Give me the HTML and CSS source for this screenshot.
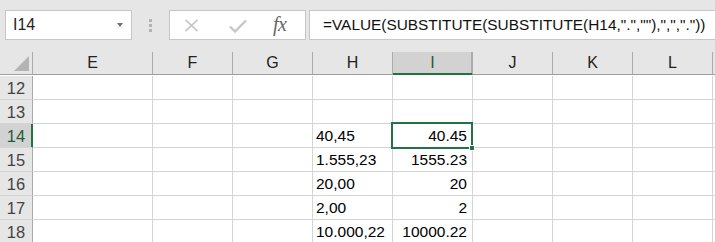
FILE: index.html
```html
<!DOCTYPE html>
<html lang="en">
<head>
    <meta charset="UTF-8">
    <title>Sheet</title>
    <link rel="stylesheet" href="styles.css">
</head>
<body>
    <div class="topbar">
        <div class="namebox">
            <span>I14</span>
            <span class="caret"></span>
        </div>
        <div class="grip"><i></i><i></i><i></i></div>
        <div class="fbuttons">
            <svg class="ico-x" width="15" height="13" viewBox="0 0 15 13">
                <path d="M1.5 0.8 L13.5 12.2 M13.5 0.8 L1.5 12.2" stroke="#c6c6c6" stroke-width="1.6" fill="none"/>
            </svg>
            <svg class="ico-ok" width="18" height="14" viewBox="0 0 18 14">
                <path d="M1 7.5 L6 12.5 L17 1.5" stroke="#c6c6c6" stroke-width="2.4" fill="none"/>
            </svg>
            <span class="fx">fx</span>
        </div>
        <div class="formula">=VALUE(SUBSTITUTE(SUBSTITUTE(H14,".",""),",","."))</div>
    </div>

    <div class="sheet">
        <div class="row head">
            <div class="cell rh corner"><span class="tri"></span></div>
            <div class="cell wide">E</div>
            <div class="cell">F</div>
            <div class="cell">G</div>
            <div class="cell">H</div>
            <div class="cell sel">I</div>
            <div class="cell">J</div>
            <div class="cell">K</div>
            <div class="cell">L</div>
            <div class="cell rest"></div>
        </div>
        <div class="body">
            <div class="row">
                <div class="cell rh">12</div>
                <div class="cell wide"></div><div class="cell"></div><div class="cell"></div>
                <div class="cell"></div><div class="cell"></div><div class="cell"></div>
                <div class="cell"></div><div class="cell"></div><div class="cell rest"></div>
            </div>
            <div class="row">
                <div class="cell rh">13</div>
                <div class="cell wide"></div><div class="cell"></div><div class="cell"></div>
                <div class="cell"></div><div class="cell"></div><div class="cell"></div>
                <div class="cell"></div><div class="cell"></div><div class="cell rest"></div>
            </div>
            <div class="row">
                <div class="cell rh sel">14</div>
                <div class="cell wide"></div><div class="cell"></div><div class="cell"></div>
                <div class="cell">40,45</div><div class="cell num">40.45</div><div class="cell"></div>
                <div class="cell"></div><div class="cell"></div><div class="cell rest"></div>
            </div>
            <div class="row">
                <div class="cell rh">15</div>
                <div class="cell wide"></div><div class="cell"></div><div class="cell"></div>
                <div class="cell">1.555,23</div><div class="cell num">1555.23</div><div class="cell"></div>
                <div class="cell"></div><div class="cell"></div><div class="cell rest"></div>
            </div>
            <div class="row">
                <div class="cell rh">16</div>
                <div class="cell wide"></div><div class="cell"></div><div class="cell"></div>
                <div class="cell">20,00</div><div class="cell num">20</div><div class="cell"></div>
                <div class="cell"></div><div class="cell"></div><div class="cell rest"></div>
            </div>
            <div class="row">
                <div class="cell rh">17</div>
                <div class="cell wide"></div><div class="cell"></div><div class="cell"></div>
                <div class="cell">2,00</div><div class="cell num">2</div><div class="cell"></div>
                <div class="cell"></div><div class="cell"></div><div class="cell rest"></div>
            </div>
            <div class="row">
                <div class="cell rh">18</div>
                <div class="cell wide"></div><div class="cell"></div><div class="cell"></div>
                <div class="cell">10.000,22</div><div class="cell num">10000.22</div><div class="cell"></div>
                <div class="cell"></div><div class="cell"></div><div class="cell rest"></div>
            </div>
            <div class="selection"><span class="handle"></span></div>
        </div>
    </div>
</body>
</html>
```

FILE: styles.css
```css
* {
    box-sizing: border-box;
}

body {
    margin: 0;
    background: #fff;
    font-family: 'Liberation Sans', Arial, sans-serif;
    color: #000;
    overflow: hidden;
}

.topbar {
    height: 52px;
    background: #e6e6e6;
    display: flex;
    align-items: flex-start;
    padding: 10px 0 0 5px;
}

.namebox {
    width: 127px;
    height: 30px;
    background: #fff;
    border: 1px solid #c6c6c6;
    display: flex;
    align-items: center;
    justify-content: space-between;
    padding: 0 8px 0 7px;
    font-size: 16px;
    color: #222;
}

.caret {
    width: 0;
    height: 0;
    border-left: 3.5px solid transparent;
    border-right: 3.5px solid transparent;
    border-top: 4px solid #6f6f6f;
}

.grip {
    width: 37px;
    height: 30px;
    display: flex;
    flex-direction: column;
    align-items: center;
    justify-content: center;
    gap: 2px;
}

.grip i {
    width: 3px;
    height: 3px;
    background: #b3b3b3;
}

.fbuttons {
    width: 137px;
    height: 30px;
    background: #fff;
    border: 1px solid #c6c6c6;
    display: flex;
    align-items: center;
    padding-left: 14px;
}

.ico-x {
    margin-top: 1px;
}

.ico-ok {
    margin-left: 30px;
    margin-top: 2px;
}

.fx {
    margin-left: 26px;
    font-family: 'Liberation Serif', 'Times New Roman', serif;
    font-style: italic;
    font-size: 20px;
    color: #666;
    letter-spacing: -0.5px;
    margin-top: -1px;
}

.formula {
    flex: 1;
    height: 30px;
    margin-left: 3px;
    margin-right: -10px;
    background: #fff;
    border: 1px solid #c6c6c6;
    padding-left: 13px;
    font-size: 15.4px;
    line-height: 27px;
    color: #111;
    white-space: nowrap;
}

.sheet {
    position: relative;
}

.row {
    display: flex;
    height: 24px;
}

.cell {
    flex: 0 0 80px;
    border-right: 1px solid #d4d4d4;
    border-bottom: 1px solid #d4d4d4;
    font-size: 15.5px;
    line-height: 24px;
    padding: 0 3px;
    white-space: nowrap;
    overflow: hidden;
}

.cell.wide {
    flex-basis: 120px;
}

.cell.rest {
    flex: 1;
}

.cell.num {
    text-align: right;
    padding-right: 5px;
}

.cell.rh {
    flex-basis: 33px;
    background: #e6e6e6;
    border-right-color: #ababab;
    border-bottom-color: #d4d4d4;
    text-align: center;
    padding: 0;
    color: #444;
    font-size: 16.5px;
}

.cell.rh.sel {
    background: #d2d2d2;
    border-right-color: #217346;
    box-shadow: inset -1px 0 0 #217346;
    color: #1e5c3a;
}

.head {
    height: 23px;
}

.head .cell {
    background: #e6e6e6;
    border-right-color: #ababab;
    border-bottom-color: #9e9e9e;
    text-align: center;
    line-height: 22px;
    font-size: 16px;
    color: #222;
}

.head .cell.sel {
    background: #d2d2d2;
    border-bottom-color: #217346;
    box-shadow: inset 0 -1px 0 #217346, inset -1px 0 0 #ababab;
    color: #1e5c3a;
}

.head .cell.corner {
    position: relative;
}

.tri {
    position: absolute;
    right: 3px;
    bottom: 3px;
    width: 0;
    height: 0;
    border-left: 15px solid transparent;
    border-bottom: 15px solid #b4b4b4;
}

.body {
    position: relative;
    padding-top: 1px;
}

.selection {
    position: absolute;
    left: 391px;
    top: 47px;
    width: 82px;
    height: 27px;
    border: 2px solid #217346;
}

.handle {
    position: absolute;
    right: -4px;
    bottom: -4px;
    width: 6px;
    height: 6px;
    background: #217346;
    border: 1px solid #fff;
}
```
